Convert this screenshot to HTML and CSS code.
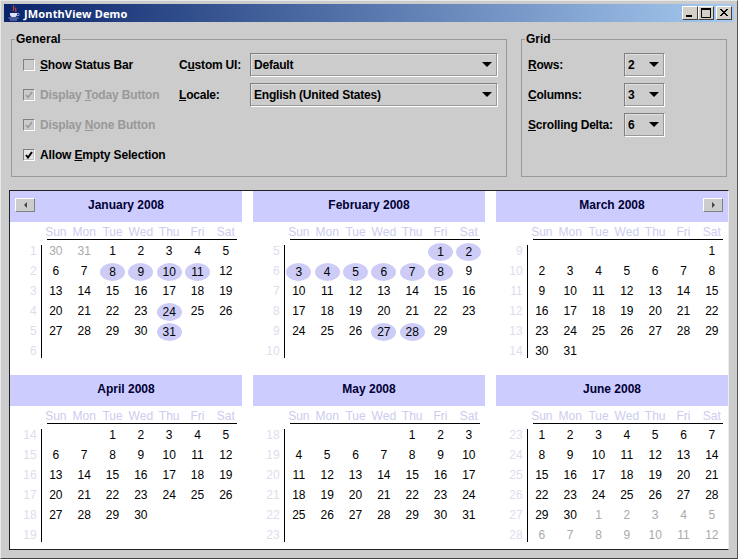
FILE: index.html
```html
<!DOCTYPE html>
<html lang="en">
<head>
<meta charset="UTF-8">
<meta name="viewport" content="width=device-width, initial-scale=1.0">
<title>JMonthView Demo</title>
<link rel="stylesheet" href="styles.css">
</head>
<body>
<div class="window">
  <div class="titlebar">
    <svg class="java-icon" width="16" height="16" viewBox="0 0 16 16">
      <path d="M8 0.500C6 2.500 9 3.500 7 6M10 2.500C9 4 10.500 5 9.500 7" fill="none" stroke="#d04040" stroke-width="1.200"/>
      <path d="M4 8h7v1.500c0 1.500-1 2.500-2 2.500H6c-1 0-2-1-2-2.500z" fill="#dfe2f6"/>
      <path d="M11 8.500h2v2h-2M2.500 13h10M4 15h7" fill="none" stroke="#8890d0"/>
    </svg>
    <span class="title">JMonthView Demo</span>
    <div class="win-buttons">
      <button class="win-btn"><svg width="10" height="10"><rect x="1" y="7" width="6" height="2" fill="#000"/></svg></button>
      <button class="win-btn"><svg width="10" height="10"><path d="M0.500 1.500h9v8h-9z" fill="none" stroke="#000"/><rect width="10" height="2"/></svg></button>
      <button class="win-btn win-close"><svg width="10" height="10"><path d="M1 1l7 7M2 1l7 7M8 1L1 8M9 1L2 8" fill="none" stroke="#000"/></svg></button>
    </div>
  </div>

  <div class="controls">
    <fieldset class="group group-general">
      <legend>General</legend>
      <div class="general-grid">
        <label class="check"><span class="box"></span><span><u>S</u>how Status Bar</span></label>
        <span class="field-label">C<u>u</u>stom UI:</span>
        <div class="combo"><span>Default</span><i class="arrow"></i></div>

        <label class="check disabled"><span class="box on"><svg width="8" height="8"><path d="M1 4l2 2.500L7 1" fill="none" stroke="#999" stroke-width="1.500"/></svg></span><span>Display <u>T</u>oday Button</span></label>
        <span class="field-label"><u>L</u>ocale:</span>
        <div class="combo"><span>English (United States)</span><i class="arrow"></i></div>

        <label class="check disabled wide"><span class="box on"><svg width="8" height="8"><path d="M1 4l2 2.500L7 1" fill="none" stroke="#999" stroke-width="1.500"/></svg></span><span>Display <u>N</u>one Button</span></label>

        <label class="check wide"><span class="box on"><svg width="8" height="8"><path d="M1 4l2 2.500L7 1" fill="none" stroke="#000" stroke-width="2"/></svg></span><span>Allow <u>E</u>mpty Selection</span></label>
      </div>
    </fieldset>

    <fieldset class="group group-grid">
      <legend>Grid</legend>
      <div class="grid-form">
        <span class="field-label"><u>R</u>ows:</span>
        <div class="combo"><span>2</span><i class="arrow"></i></div>
        <span class="field-label"><u>C</u>olumns:</span>
        <div class="combo"><span>3</span><i class="arrow"></i></div>
        <span class="field-label"><u>S</u>crolling Delta:</span>
        <div class="combo"><span>6</span><i class="arrow"></i></div>
      </div>
    </fieldset>
  </div>

  <div class="calendar" id="calendar"></div>
</div>
<script src="months.js"></script>
</body>
</html>
```

FILE: styles.css
```css
html, body {
  margin: 0;
  padding: 0;
}
body {
  width: 738px;
  height: 559px;
  overflow: hidden;
  font-family: "Liberation Sans", Arial, sans-serif;
  font-size: 12px;
  color: #000000;
  background-color: #cccccc;
}
.window {
  box-sizing: border-box;
  width: 738px;
  height: 559px;
  padding: 4px 4px 0 4px;
  background-color: #cccccc;
  border-top: 1px solid #e8e8e8;
  border-left: 1px solid #e8e8e8;
  border-right: 1px solid #555555;
  border-bottom: 1px solid #444444;
  display: flex;
  flex-direction: column;
}

/* title bar */
.titlebar {
  height: 18px;
  margin: -1px -1px 0 -1px;
  padding: 0 2px 0 2px;
  display: flex;
  align-items: center;
  background: linear-gradient(to right, #0a246a, #a6caf0);
  color: #ffffff;
}
.java-icon {
  margin-right: 2px;
  flex: none;
}
.title {
  font-family: "Noto Sans", "Liberation Sans", sans-serif;
  font-weight: bold;
  font-size: 11px;
  letter-spacing: 0.15px;
  flex: 1;
}
.win-buttons {
  display: flex;
}
.win-btn {
  box-sizing: border-box;
  width: 16px;
  height: 14px;
  padding: 0;
  display: flex;
  align-items: center;
  justify-content: center;
  background-color: #d4d0c8;
  border: 1px solid;
  border-color: #ffffff #404040 #404040 #ffffff;
}
.win-close {
  margin-left: 2px;
}

/* option groups */
.controls {
  display: flex;
  gap: 14px;
  margin: 10px 0 0 6px;
  height: 145px;
}
.group {
  box-sizing: border-box;
  margin: 0;
  padding: 0;
  height: 145px;
  border: 1px solid #999999;
  min-width: 0;
}
.group legend {
  padding: 0 1px;
  margin-left: 3px;
  font-weight: bold;
  font-size: 12px;
  line-height: 14px;
}
.group-general {
  width: 496px;
}
.group-grid {
  width: 206px;
}
.general-grid {
  display: grid;
  grid-template-columns: 156px 71px 248px;
  grid-auto-rows: 24px;
  row-gap: 6px;
  align-items: center;
  padding: 7px 0 0 11px;
}
.grid-form {
  display: grid;
  grid-template-columns: 96px 41px;
  grid-auto-rows: 24px;
  row-gap: 6px;
  align-items: center;
  padding: 7px 0 0 6px;
}
.check {
  display: flex;
  align-items: center;
  gap: 5px;
  font-weight: bold;
  letter-spacing: -0.15px;
  white-space: nowrap;
}
.wide {
  grid-column: 1 / -1;
}
.check.disabled {
  color: #999999;
}
.box {
  box-sizing: border-box;
  width: 12px;
  height: 12px;
  display: flex;
  align-items: center;
  justify-content: center;
  border: 1px solid;
  border-color: #808080 #ffffff #ffffff #808080;
  box-shadow: inset -1px -1px 0 #c0c0c0;
}
.box.on {
  background-color: #e4e4e4;
}
.check.disabled .box {
  background-color: #cccccc;
}
.field-label {
  font-weight: bold;
  letter-spacing: -0.2px;
  white-space: nowrap;
}
.combo {
  box-sizing: border-box;
  height: 24px;
  padding: 0 4px 0 3px;
  display: flex;
  align-items: center;
  justify-content: space-between;
  font-weight: bold;
  letter-spacing: -0.2px;
  border: 1px solid;
  border-color: #808080 #ffffff #ffffff #808080;
  box-shadow: inset -1px -1px 0 #999999, inset 1px 1px 0 #e0e0e0;
}
.arrow {
  width: 0;
  height: 0;
  margin-right: 1px;
  margin-bottom: 2px;
  border-left: 5px solid transparent;
  border-right: 5px solid transparent;
  border-top: 5px solid #000000;
}

/* month grid */
.calendar {
  box-sizing: border-box;
  width: 720px;
  height: 360px;
  margin: 13px 0 0 4px;
  display: grid;
  grid-template-columns: repeat(3, 232px);
  grid-template-rows: 184px 174px;
  column-gap: 11px;
  overflow: hidden;
  background-color: #ffffff;
  border-top: 1px solid #222222;
  border-left: 1px solid #222222;
  border-right: 1px solid #eeeeee;
  border-bottom: 1px solid #222222;
}
.month-head {
  box-sizing: border-box;
  height: 31px;
  padding: 0 5px 4px 5px;
  display: grid;
  grid-template-columns: 1fr auto 1fr;
  align-items: center;
  background-color: #ccccff;
  color: #000033;
  font-weight: bold;
  font-size: 12px;
}
.nav {
  box-sizing: border-box;
  width: 20px;
  height: 14px;
  padding: 0;
  display: flex;
  align-items: center;
  justify-content: center;
  background-color: #cccccc;
  border: 1px solid;
  border-color: #ffffff #808080 #808080 #ffffff;
}
.nav.next {
  justify-self: end;
  grid-column: 3;
}
.nav i {
  width: 0;
  height: 0;
  border-top: 3px solid transparent;
  border-bottom: 3px solid transparent;
}
.nav.prev i {
  border-right: 3px solid #444444;
}
.nav.next i {
  border-left: 3px solid #444444;
}
.names,
.week-row {
  display: grid;
  grid-template-columns: 31.7px repeat(7, 28.33px);
  text-align: center;
}
.names {
  height: 15px;
  padding-top: 2px;
  line-height: 16px;
  color: #ccccee;
}
.rule {
  width: 190px;
  height: 1px;
  margin: 0 0 1px 37px;
  background-color: #000000;
}
.weeks-body {
  background: linear-gradient(#000000, #000000) 31px 4px / 1px 113px no-repeat;
}
.week-row {
  height: 20px;
  line-height: 20px;
}
.week-no {
  padding-right: 5px;
  text-align: right;
  color: #ddddee;
}
.day {
  display: flex;
  align-items: center;
  justify-content: center;
}
.day.other {
  color: #aaaaaa;
}
.day.selected span {
  width: 25px;
  height: 18px;
  line-height: 18px;
  margin-top: 1px;
  border-radius: 50%;
  background-color: #ccccf6;
  text-align: center;
}
```

FILE: months.js
```js
// JMonthView demo data: 2008, first half, two rows of three
const months = [
  { name: 'January', index: 0, week: 1, leading: true, selected: [8, 9, 10, 11, 24, 31] },
  { name: 'February', index: 1, week: 5, selected: [1, 2, 3, 4, 5, 6, 7, 8, 27, 28] },
  { name: 'March', index: 2, week: 9 },
  { name: 'April', index: 3, week: 14 },
  { name: 'May', index: 4, week: 18 },
  { name: 'June', index: 5, week: 23, trailing: true }
];
const dayNames = ['Sun', 'Mon', 'Tue', 'Wed', 'Thu', 'Fri', 'Sat'];

function dayCell(date, month) {
  const first = new Date(2008, month.index, 1);
  const inMonth = date.getMonth() === month.index;
  const shown = inMonth || (date < first ? month.leading : month.trailing);
  if (!shown) return '<div class="day"></div>';
  const picked = inMonth && (month.selected || []).includes(date.getDate());
  const cls = 'day' + (inMonth ? '' : ' other') + (picked ? ' selected' : '');
  return `<div class="${cls}"><span>${date.getDate()}</span></div>`;
}

function monthHtml(month) {
  const start = new Date(2008, month.index, 1);
  start.setDate(1 - start.getDay());
  let rows = '';
  for (let w = 0; w < 6; w++) {
    let cells = '';
    for (let d = 0; d < 7; d++) {
      cells += dayCell(new Date(start.getFullYear(), start.getMonth(), start.getDate() + w * 7 + d), month);
    }
    rows += `<div class="week-row"><div class="week-no">${month.week + w}</div>${cells}</div>`;
  }
  let nav = '';
  if (month.index === 0) nav = '<button class="nav prev"><i></i></button>';
  if (month.index === 2) nav = '<button class="nav next"><i></i></button>';
  const title = `<span class="month-title">${month.name} 2008</span>`;
  const head = month.index === 0 ? nav + title : (month.index === 2 ? '<span></span>' + title + nav : '<span></span>' + title);
  const names = dayNames.map(function(n) { return `<div>${n}</div>`; }).join('');
  return `<div class="month">
    <div class="month-head">${head}</div>
    <div class="names"><div></div>${names}</div>
    <div class="rule"></div>
    <div class="weeks-body">${rows}</div>
  </div>`;
}

document.getElementById('calendar').innerHTML = months.map(monthHtml).join('');
```
